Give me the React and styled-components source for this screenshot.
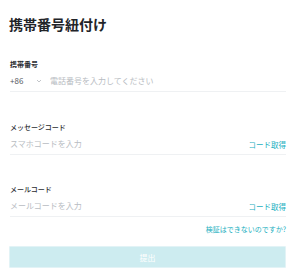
import styled, { createGlobalStyle } from 'styled-components';

const GlobalStyle = createGlobalStyle`
  html, body {
    margin: 0;
    padding: 0;
    background: #ffffff;
  }
  body {
    font-family: 'Noto Sans CJK JP', 'Noto Sans', sans-serif;
  }
`;

const Page = styled.div`
  width: 300px;
  box-sizing: border-box;
  padding: 14px 14px 0 10px;
`;

const Title = styled.h1`
  margin: 0 0 25px -1px;
  font-size: 14px;
  line-height: 20px;
  font-weight: 700;
  color: #222428;
`;

const Field = styled.div`
  margin-bottom: ${(p) => p.gap || 0}px;
`;

const Label = styled.div`
  font-size: 7px;
  line-height: 10px;
  font-weight: ${(p) => (p.bold ? 700 : 500)};
  color: #2b2d31;
  margin-bottom: 1px;
`;

const Row = styled.div`
  display: flex;
  align-items: center;
  height: 21px;
  border-bottom: 1px solid #eff1f3;
`;

const Prefix = styled.span`
  font-size: 8px;
  color: #55585e;
  width: 26px;
`;

const Chevron = styled.svg`
  width: 6px;
  height: 6px;
  margin-right: 8px;
`;

const Placeholder = styled.span`
  flex: 1;
  font-size: 8px;
  color: #b8bcc2;
`;

const Action = styled.span`
  font-size: 7.5px;
  color: #1aafc0;
  margin-top: 2px;
`;

const HelpLink = styled.div`
  margin-top: 7px;
  text-align: right;
  font-size: 7px;
  line-height: 10px;
  color: #1aafc0;
`;

const Submit = styled.button`
  display: block;
  width: 100%;
  height: 22px;
  margin-top: 12px;
  margin-left: -1px;
  width: calc(100% + 1px);
  border: 1px solid #e2f3f6;
  border-radius: 1px;
  background: #cdecf0;
  color: #ffffff;
  font-family: inherit;
  font-size: 8px;
`;

const DownIcon = () => (
  <Chevron viewBox="0 0 6 6">
    <path d="M1 2 L3 4 L5 2" fill="none" stroke="#a9adb3" strokeWidth="0.7" />
  </Chevron>
);

export default function App() {
  return (
    <Page>
      <GlobalStyle />
      <Title>携帯番号紐付け</Title>
      <Field gap={30}>
        <Label bold>携帯番号</Label>
        <Row>
          <Prefix>+86</Prefix>
          <DownIcon />
          <Placeholder>電話番号を入力してください</Placeholder>
        </Row>
      </Field>
      <Field gap={29}>
        <Label>メッセージコード</Label>
        <Row>
          <Placeholder>スマホコードを入力</Placeholder>
          <Action>コード取得</Action>
        </Row>
      </Field>
      <Field>
        <Label>メールコード</Label>
        <Row>
          <Placeholder>メールコードを入力</Placeholder>
          <Action>コード取得</Action>
        </Row>
      </Field>
      <HelpLink>検証はできないのですか?</HelpLink>
      <Submit>提出</Submit>
    </Page>
  );
}
